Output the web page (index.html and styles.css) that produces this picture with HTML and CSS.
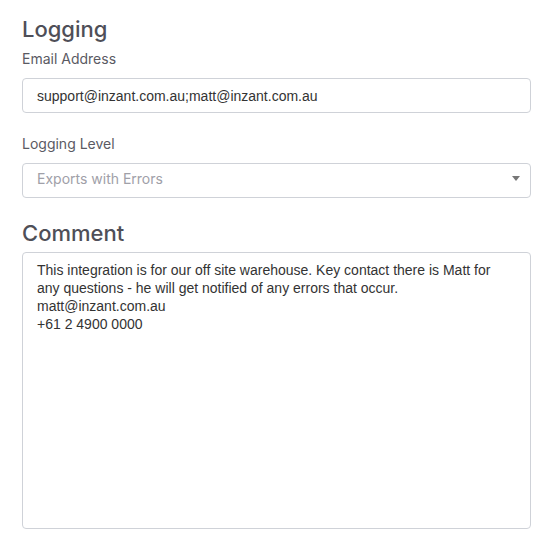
FILE: index.html
```html
<!DOCTYPE html>
<html>
<head>
<meta charset="utf-8">
<link rel="stylesheet" href="styles.css">
</head>
<body>
<div class="panel">
  <h2 class="heading">Logging</h2>
  <div class="field">
    <label class="label">Email Address</label>
    <div class="input">support@inzant.com.au;matt@inzant.com.au</div>
  </div>
  <div class="field">
    <label class="label">Logging Level</label>
    <div class="input select">
      <span class="select-text">Exports with Errors</span>
      <span class="caret"></span>
    </div>
  </div>
  <h2 class="heading heading-comment">Comment</h2>
  <div class="textarea">This integration is for our off site warehouse. Key contact there is Matt for any questions - he will get notified of any errors that occur.<br>matt@inzant.com.au<br>+61 2 4900 0000</div>
</div>
</body>
</html>
```

FILE: styles.css
```css
html, body {
  margin: 0;
  padding: 0;
  background: #ffffff;
}
.panel {
  width: 509px;
  margin-left: 22px;
  padding-top: 15px;
  display: flex;
  flex-direction: column;
  font-family: Inter, "Open Sans", sans-serif;
}
.heading {
  margin: 0;
  font-size: 22px;
  font-weight: 500;
  line-height: 28px;
  color: #4f4f58;
}
.heading-comment {
  margin-top: 21px;
}
.field {
  margin-top: 6px;
}
.field + .field {
  margin-top: 21px;
}
.label {
  display: block;
  font-size: 14px;
  line-height: 20px;
  color: #5a5a63;
  margin-bottom: 9px;
}
.input {
  box-sizing: border-box;
  height: 35px;
  border: 1px solid #cfd2d8;
  border-radius: 4px;
  padding: 0 14px;
  display: flex;
  align-items: center;
  font-family: "Liberation Sans", Arial, sans-serif;
  font-size: 14px;
  color: #333333;
}
.select {
  justify-content: space-between;
  padding-bottom: 4px;
  font-family: Inter, "Open Sans", sans-serif;
  color: #a0a0a8;
}
.caret {
  width: 0;
  height: 0;
  border-left: 4px solid transparent;
  border-right: 4px solid transparent;
  border-top: 5px solid #777777;
  margin-right: -4px;
}
.textarea {
  box-sizing: border-box;
  height: 277px;
  margin-top: 5px;
  border: 1px solid #cfd2d8;
  border-radius: 4px;
  padding: 8px 14px;
  font-family: "Liberation Sans", Arial, sans-serif;
  font-size: 14px;
  line-height: 18px;
  color: #333333;
}
```
